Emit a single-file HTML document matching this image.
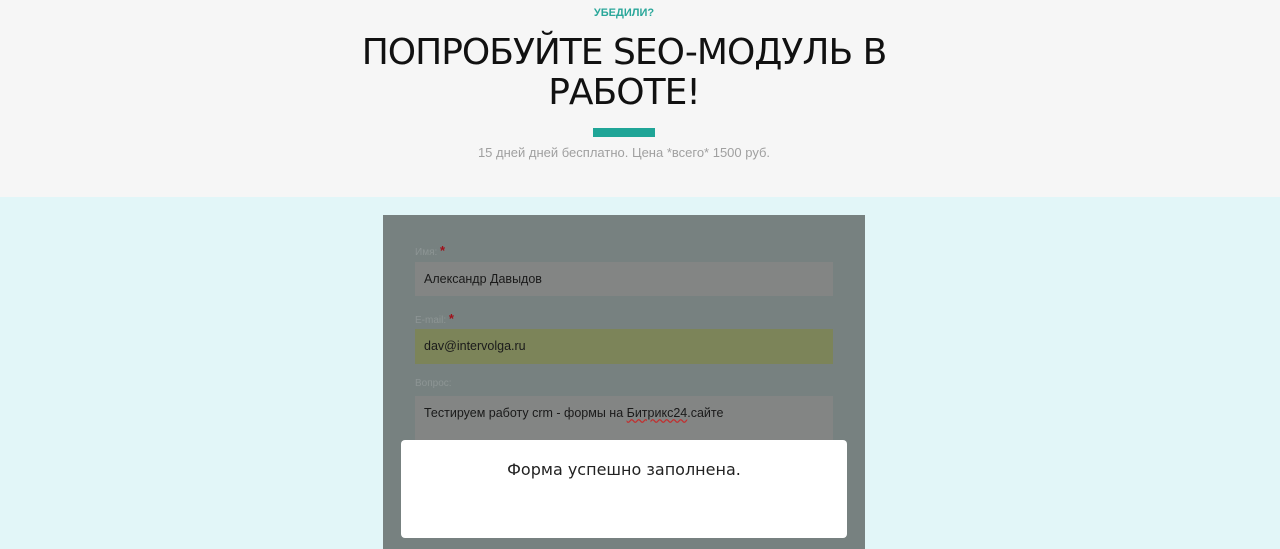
<!DOCTYPE html>
<html><head><meta charset="utf-8"><style>
body{margin:0;width:1280px;height:549px;overflow:hidden;font-family:"Liberation Sans","DejaVu Sans",sans-serif;background:#e2f6f8;position:relative}
.top{position:absolute;left:0;top:0;width:1248px;height:197px;text-align:center}
.bg{position:absolute;left:0;top:0;width:1280px;height:197px;background:#f6f6f6}
.a{position:absolute;top:7px;width:100%;font-size:11px;font-weight:bold;color:#2aa79a}
h1{position:absolute;top:33px;left:0;width:100%;margin:0;font-weight:normal;font-size:36px;line-height:40px;color:#111;font-family:"DejaVu Sans",sans-serif;letter-spacing:-1px}
.bar{position:absolute;left:593px;top:128px;width:62px;height:9px;background:#1fa597}
.sub{position:absolute;top:145px;width:100%;font-size:13px;color:#a0a0a0}
.form{position:absolute;left:383px;top:215px;width:482px;height:334px;background:#778180}
.lbl{position:absolute;left:32px;font-size:10px;color:#8d9594}
.lbl b{color:#a0101a;font-size:13px}
.f{position:absolute;left:32px;width:418px;background:#838584;font-size:12.5px;color:#1a1a1a;padding-left:9px;box-sizing:border-box}
.modal{position:absolute;left:401px;top:440px;width:446px;height:98px;background:#fff;border-radius:4px;text-align:center;font-size:16px;font-family:"DejaVu Sans",sans-serif;color:#222}
</style></head><body>
<div class="bg"></div>
<div class="top">
<div class="a">УБЕДИЛИ?</div>
<h1>ПОПРОБУЙТЕ SEO-МОДУЛЬ В<br>РАБОТЕ!</h1>
<div class="bar"></div>
<div class="sub">15 дней дней бесплатно. Цена *всего* 1500 руб.</div>
</div>
<div class="form">
<div class="lbl" style="top:28px">Имя: <b>*</b></div>
<div class="f" style="top:47px;height:34px;line-height:34px">Александр Давыдов</div>
<div class="lbl" style="top:96px">E-mail: <b>*</b></div>
<div class="f" style="top:114px;height:35px;line-height:35px;background:#7c8459">dav@intervolga.ru</div>
<div class="lbl" style="top:163px">Вопрос:</div>
<div class="f" style="top:181px;height:44px;line-height:34px">Тестируем работу crm - формы на <span style="text-decoration:underline wavy #c03030">Битрикс24</span>.сайте</div>
</div>
<div class="modal"><div style="padding-top:20px">Форма успешно заполнена.</div></div>
</body></html>
